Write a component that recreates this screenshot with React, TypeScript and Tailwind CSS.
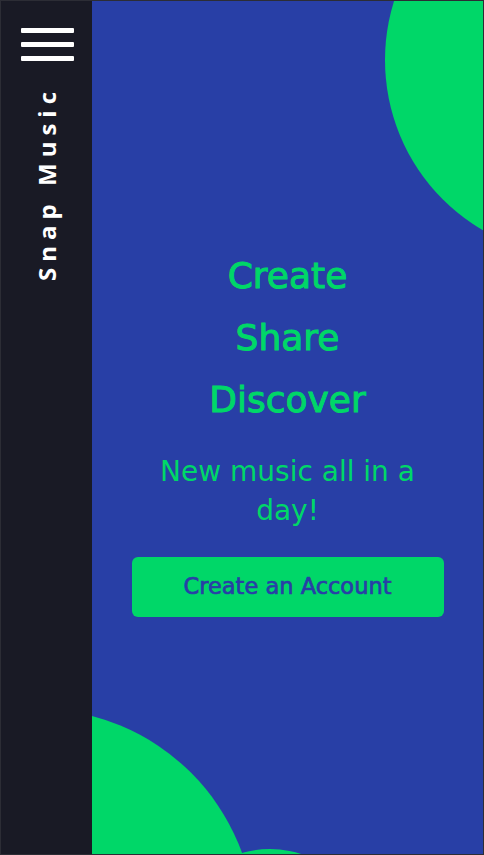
export default function App() {
  return (
    <div className="w-[484px] h-[855px] flex border border-[#2c2d35] bg-[#191a25] overflow-hidden">
      {/* side bar */}
      <aside className="w-[91px] shrink-0 bg-[#191a25] flex flex-col items-center pt-[27px]">
        <button className="flex flex-col gap-[9px] w-[53px] ml-[2px]">
          <span className="block h-[5px] w-full bg-white rounded-[1px]" />
          <span className="block h-[5px] w-full bg-white rounded-[1px]" />
          <span className="block h-[5px] w-full bg-white rounded-[1px]" />
        </button>
        <span className="mt-[25px] [writing-mode:vertical-rl] rotate-180 text-white text-[24px] font-bold tracking-[6px] font-['Open_Sans',sans-serif]">
          Snap Music
        </span>
      </aside>

      {/* main */}
      <main className="relative flex-1 overflow-hidden bg-[#283fa6] flex flex-col items-center pt-[244px] font-['DejaVu_Sans',sans-serif] text-[#00d768]">
        <div className="absolute left-[293px] top-[-138px] w-[394px] h-[394px] rounded-full bg-[#00d768]" />
        <div className="absolute left-[-273px] top-[708px] w-[436px] h-[436px] rounded-full bg-[#00d768]" />
        <div className="absolute left-[78px] top-[848px] w-[200px] h-[200px] rounded-full bg-[#00d768]" />

        <h1 className="relative text-[36px] font-normal leading-[62px] text-center [-webkit-text-stroke:1px_#00d768]">
          Create
          <br />
          Share
          <br />
          Discover
        </h1>
        <p className="relative mt-[21px] w-[300px] text-[28px] leading-[39px] text-center">
          New music all in a day!
        </p>
        <button className="relative mt-[27px] w-[312px] h-[60px] rounded-[6px] bg-[#00d768] text-[#283fa6] text-[22.5px] [-webkit-text-stroke:0.7px_#283fa6]">
          Create an Account
        </button>
      </main>
    </div>
  );
}
